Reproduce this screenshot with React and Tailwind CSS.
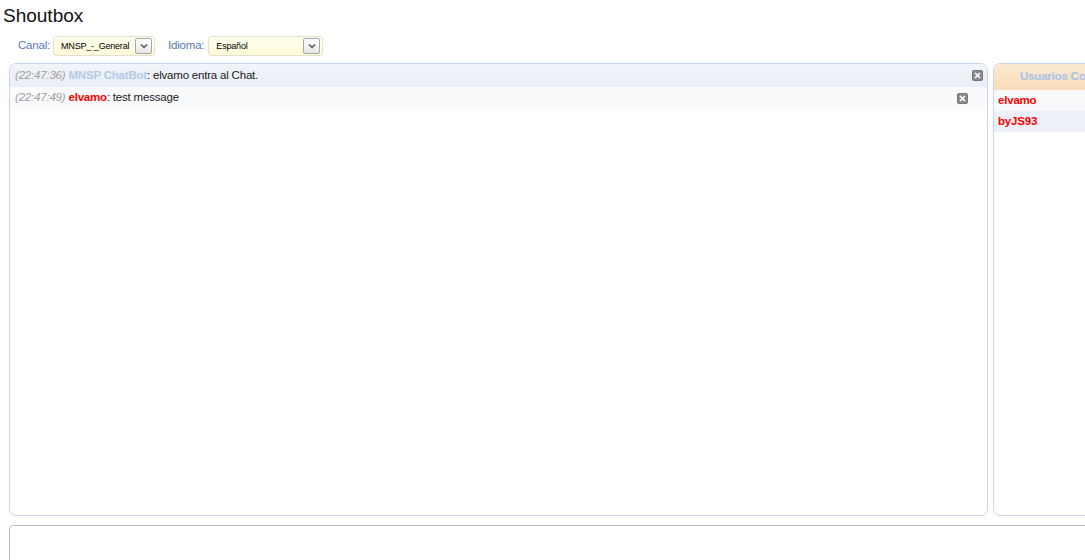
import React from "react";

const font = { fontFamily: '"Liberation Sans", Arial, sans-serif' };

function CloseIcon() {
  return (
    <span className="inline-flex items-center justify-center w-[11px] h-[11px] rounded-[2px] bg-[#8a8a8a] border border-[#777]">
      <svg width="7" height="7" viewBox="0 0 7 7">
        <path d="M1 1 L6 6 M6 1 L1 6" stroke="#fff" strokeWidth="1.6" />
      </svg>
    </span>
  );
}

function FakeSelect({ value, width }) {
  return (
    <div
      className={`flex items-center justify-between h-[20px] ${width} pl-[7px] pr-[2px] rounded-[3px] border border-[#e2e2cc] bg-gradient-to-b from-[#fffff0] to-[#fdfbd8]`}
    >
      <span className="text-[9px] text-black leading-none whitespace-nowrap">{value}</span>
      <span className="flex items-center justify-center w-[17px] h-[16px] shrink-0 rounded-[2px] border border-[#a8a8a8] bg-gradient-to-b from-white to-[#e6e6e6]">
        <svg width="8" height="6" viewBox="0 0 8 6">
          <path d="M1 1.5 L4 4.5 L7 1.5" stroke="#555" strokeWidth="1.5" fill="none" />
        </svg>
      </span>
    </div>
  );
}

export default function App() {
  return (
    <div className="w-full h-[560px] overflow-hidden bg-white" style={font}>
      <h1 className="text-[19px] leading-none text-[#111] pl-[3px] pt-[6px]">Shoutbox</h1>

      <div className="flex items-center mt-[11px] pl-[18px] text-[11.5px] tracking-[-0.2px]">
        <span className="text-[#5a78b8] mr-[3px]">Canal:</span>
        <FakeSelect value="MNSP_-_General" width="w-[102px]" />
        <span className="text-[#5a78b8] ml-[13px] mr-[4px]">Idioma:</span>
        <FakeSelect value="Español" width="w-[115px]" />
      </div>

      <div className="flex gap-[5px] mt-[7px] pl-[9px] w-[1280px]">
        {/* chat */}
        <div className="w-[979px] h-[453px] rounded-[7px] border border-[#c6d6e9] overflow-hidden text-[11.5px] tracking-[-0.2px]">
          <div className="flex items-center justify-between h-[23px] pl-[5px] pr-[4px] bg-gradient-to-b from-[#f1f4f9] to-[#e9eef5]">
            <span>
              <i className="text-[#a0a0a0]">(22:47:36)</i>{" "}
              <b className="text-[#b3cae6]">MNSP ChatBot</b>
              <span className="text-[#222]">: elvamo entra al Chat.</span>
            </span>
            <CloseIcon />
          </div>
          <div className="flex items-center justify-between h-[22px] pl-[5px] pr-[19px] bg-[#f9fafc]">
            <span>
              <i className="text-[#a0a0a0]">(22:47:49)</i>{" "}
              <b className="text-[#ff0000]">elvamo</b>
              <span className="text-[#222]">: test message</span>
            </span>
            <CloseIcon />
          </div>
        </div>

        {/* users */}
        <div className="w-[176px] h-[453px] rounded-[7px] border border-[#c6d6e9] overflow-hidden text-[11.5px] tracking-[-0.2px]">
          <div className="h-[26px] flex items-center pl-[26px] whitespace-nowrap bg-gradient-to-b from-[#fbe9d4] to-[#f9dcb8]">
            <b className="text-[#a6c2ec]">Usuarios Conectados</b>
          </div>
          <div className="h-[21px] flex items-center pl-[4px] bg-[#f8f9fb]">
            <b className="text-[#ff0000]">elvamo</b>
          </div>
          <div className="h-[21px] flex items-center pl-[4px] bg-[#edf1f7]">
            <b className="text-[#ff0000]">byJS93</b>
          </div>
        </div>
      </div>

      <div className="mt-[9px] ml-[9px] w-[1200px] h-[60px] rounded-[4px] border border-[#bdbdbd]" />
    </div>
  );
}
